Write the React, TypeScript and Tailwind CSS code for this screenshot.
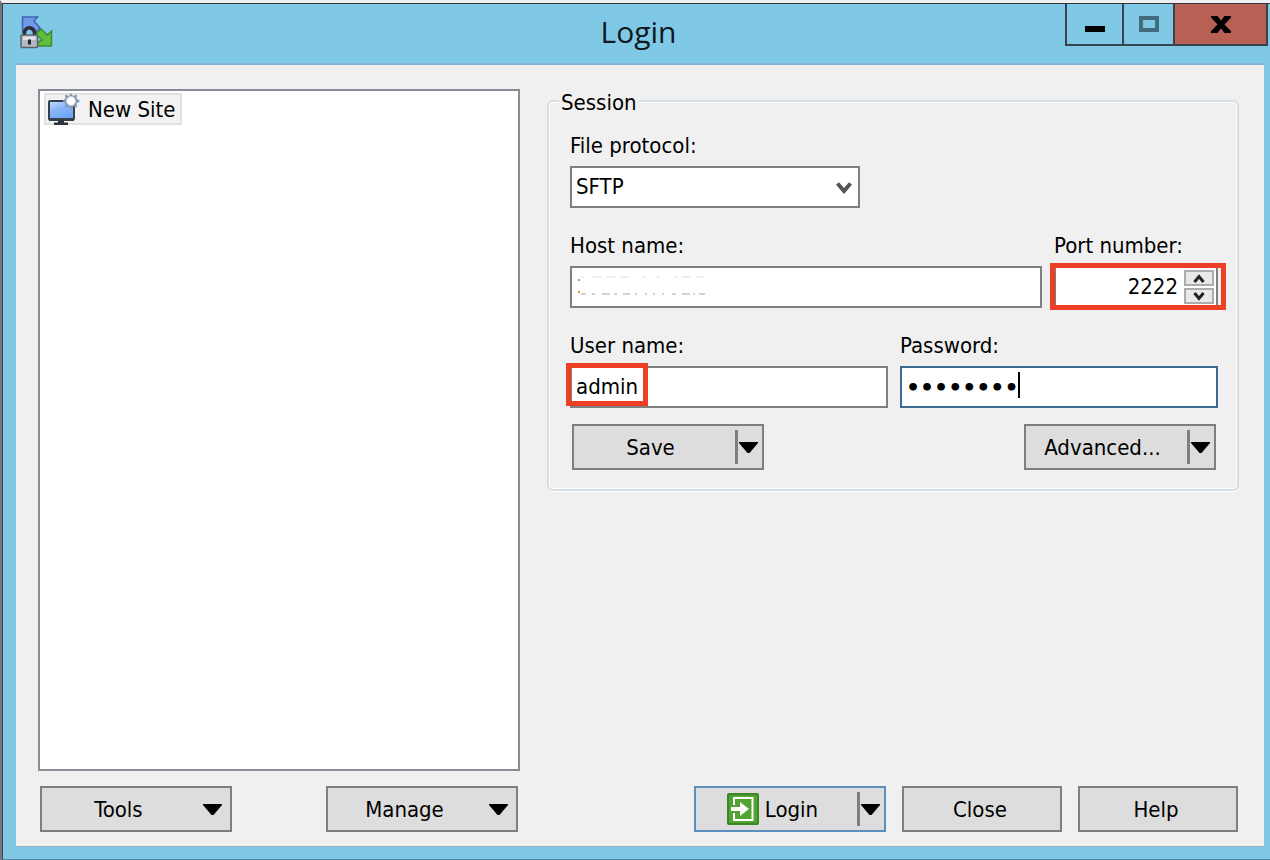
import React, { useState } from 'react';

const inputClass =
  'block h-[42px] w-full min-w-0 rounded-none border-2 border-[#7f7f7f] bg-white pb-[2px] text-black outline-none';

interface FieldProps {
  id: string;
  label: string;
  className?: string;
  children: React.ReactNode;
}

function Field({ id, label, className = '', children }: FieldProps) {
  return (
    <div className={`flex flex-col gap-[6px] ${className}`}>
      <label htmlFor={id} className="h-7 leading-7">
        {label}
      </label>
      <div className="relative">{children}</div>
    </div>
  );
}

function DownTriangle() {
  return (
    <svg width="19" height="11" viewBox="0 0 19 11" aria-hidden="true">
      <path d="M0 0H19V1L10.500 11H8.500L0 1Z" fill="#000" />
    </svg>
  );
}

interface SplitButtonProps {
  label: string;
  icon?: React.ReactNode;
  primary?: boolean;
}

// Button with a separate drop-down part on the right
function SplitButton({ label, icon, primary = false }: SplitButtonProps) {
  return (
    <div
      className={`flex h-[46px] w-48 border-2 bg-[#dddddd] ${primary ? 'border-[#5b8fbe]' : 'border-[#7f7f7f]'}`}
    >
      <button type="button" className="flex flex-1 items-center justify-center gap-[6px] pr-2">
        {icon}
        {label}
      </button>
      <div className="my-1 w-[3px] bg-[#7f7f7f]" />
      <button type="button" aria-label={`${label} options`} className="flex w-6 items-center pl-px">
        <DownTriangle />
      </button>
    </div>
  );
}

function MenuButton({ label }: { label: string }) {
  return (
    <button
      type="button"
      className="flex h-[46px] w-48 items-center border-2 border-[#7f7f7f] bg-[#dddddd] pr-2"
    >
      <span className="flex-1 pr-2">{label}</span>
      <DownTriangle />
    </button>
  );
}

function PlainButton({ label }: { label: string }) {
  return (
    <button type="button" className="h-[46px] w-40 border-2 border-[#7f7f7f] bg-[#dddddd] pr-1 text-center">
      {label}
    </button>
  );
}

function AppIcon() {
  return (
    <svg width="34" height="34" viewBox="0 0 34 34" aria-hidden="true">
      <path d="M2.500 1H17.500L14 5L20 12L15 17L8 11L2.500 16Z" fill="#6d9bea" stroke="#3f62ad" strokeWidth="1.500" />
      <path d="M16 18L21 13L27.500 19L31.500 15V30H17V27L22 24Z" fill="#62bd3c" stroke="#3b8f2c" strokeWidth="1.500" />
      <path d="M4.500 20V17C4.500 10 14.500 10 14.500 17V20" fill="none" stroke="#2c2c31" strokeWidth="3.500" />
      <rect x="1" y="19" width="16.500" height="12.500" rx="1" fill="#b3b7c4" stroke="#5d616e" strokeWidth="1.500" />
      <path d="M3 20.500H15.500V24H3Z" fill="#dfe1e8" />
      <path d="M8 23.500H11V28.500H8Z" fill="#25262c" />
    </svg>
  );
}

function SiteIcon() {
  return (
    <svg width="32" height="32" viewBox="0 0 32 32" aria-hidden="true">
      <defs>
        <linearGradient id="screen" x1="0" y1="0" x2="0.500" y2="1">
          <stop offset="0" stopColor="#c4dcff" />
          <stop offset="0.500" stopColor="#8ab5f6" />
          <stop offset="1" stopColor="#6ea5f5" />
        </linearGradient>
      </defs>
      <rect x="1" y="8" width="25" height="18.500" rx="1" fill="url(#screen)" stroke="#36414c" strokeWidth="2" />
      <path d="M1 26.500H26" stroke="#36414c" strokeWidth="3" />
      <path d="M10 27H16V29.500H20V32H6V29.500H10Z" fill="#2c343d" />
      <path
        d="M23 0L25 3L29 1.500L28.500 5.500L32 8L28.500 10.500L29 14.500L25 13.500L23 16.500L21 13.500L17 14.500L17.500 10.500L14.500 8L17.500 5.500L17 1.500L21 3Z"
        fill="#8298b0"
      />
      <circle cx="23" cy="8" r="4.500" fill="#fff" stroke="#c4d2df" />
    </svg>
  );
}

function LoginIcon() {
  return (
    <svg width="32" height="32" viewBox="0 0 32 32" aria-hidden="true">
      <rect width="32" height="32" rx="2" fill="#3e8526" />
      <rect x="2" y="2" width="28" height="28" rx="1" fill="#52a332" />
      <path d="M7 12V5H25.500V27H7V20" fill="none" stroke="#fff" strokeWidth="2" />
      <path d="M4 14H13V9L22 16L13 23V18H4Z" fill="#fff" />
    </svg>
  );
}

// Leftover specks of the blanked-out host address
function HostRemnant() {
  return (
    <svg
      className="pointer-events-none absolute top-[10px] left-2"
      width="130"
      height="20"
      viewBox="0 0 130 20"
      aria-hidden="true"
    >
      <path
        d="M3 1H6M14 1H24M29 1H37M43 1H51M65 1H68M79 1H82M97 1H100M104 1H112M119 1H127"
        stroke="#dedede"
      />
      <path
        d="M3 18H8M14 18H17M24 18H32M36 18H39M45 18H52M57 18H59M67 18H69M75 18H77M84 18H86M94 18H98M104 18H112M115 18H117M121 18H127"
        stroke="#a5a5a5"
      />
      <path d="M0 4H2M0 16H2" stroke="#cf9250" strokeWidth="2" />
    </svg>
  );
}

export default function App() {
  const [protocol, setProtocol] = useState('SFTP');
  const [port, setPort] = useState(2222);
  const [user, setUser] = useState('admin');
  const [password, setPassword] = useState('password');

  return (
    <div className="min-h-screen border-t-[3px] border-l-2 border-t-[#f0f0f0] border-l-[#77777c] bg-[#7fc9e6] font-['DejaVu_Sans_Condensed','DejaVu_Sans',sans-serif] text-[22px] text-black">
      <div className="flex min-h-[calc(100vh-3px)] flex-col border-t border-b border-l border-t-[#30373c] border-b-[#4f87a5] border-l-[#39424a]">
        {/* Title bar */}
        <header className="grid h-[59px] grid-cols-[1fr_auto_1fr] items-start">
          <div className="pt-3 pl-[17px]">
            <AppIcon />
          </div>
          <h1 className="pt-2 pl-1 font-['Open_Sans',sans-serif] text-[30px] leading-10 text-[#10181c]">Login</h1>
          <div className="mr-[2px] flex h-[42px] justify-self-end border-r-2 border-b-2 border-l-2 border-[#3a434b]">
            <button type="button" aria-label="Minimize" className="flex w-[55px] justify-center pt-[22px]">
              <span className="h-[6px] w-5 bg-black" />
            </button>
            <button
              type="button"
              aria-label="Maximize"
              className="flex w-[53px] justify-center border-x-2 border-[#3a434b] pt-3"
            >
              <span className="h-4 w-5 border-4 border-[#416a7c]" />
            </button>
            <button type="button" aria-label="Close window" className="flex w-[91px] justify-center bg-[#b96054] pt-3">
              <svg width="20" height="17" viewBox="0 0 20 17" aria-hidden="true">
                <path d="M0 0H6.500L10 4.500L13.500 0H20V1.500L13.500 8.500L20 15V17H13.500L10 12.500L6.500 17H0V15L6.500 8.500L0 1.500Z" />
              </svg>
            </button>
          </div>
        </header>

        {/* Dialog body */}
        <main className="mr-[6px] mb-3 ml-[13px] flex flex-1 gap-[27px] border-t-2 border-b border-t-[#83b3cf] border-b-[#94b4c6] bg-[#f0f0f0] pt-6 pr-[25px] pb-[14px] pl-[22px]">
          <section className="flex w-[482px] shrink-0 flex-col gap-[15px]">
            <div className="flex-1 border-2 border-[#898c95] bg-white px-1 py-[2px]">
              <ul>
                <li className="flex h-8 w-[138px] items-center border-2 border-[#e2e2e2] bg-[#f2f2f2]">
                  <button type="button" className="flex items-center gap-2 pl-[2px] whitespace-nowrap">
                    <SiteIcon />
                    New Site
                  </button>
                </li>
              </ul>
            </div>
            <div className="flex justify-between px-[2px]">
              <MenuButton label="Tools" />
              <MenuButton label="Manage" />
            </div>
          </section>

          <form className="flex min-w-0 flex-1 flex-col justify-between" onSubmit={(e) => e.preventDefault()}>
            <fieldset className="min-w-0 rounded-md border-2 border-[#d5dfe5] pr-[19px] pb-[19px] pl-[21px] shadow-[inset_0_0_0_1px_#fff,0_1px_0_#fff]">
              <legend className="-ml-[11px] h-6 bg-[#f0f0f0] px-[2px] leading-7">Session</legend>

              <div className="flex flex-col gap-6 pt-[19px]">
                <Field id="protocol" label="File protocol:" className="w-[290px]">
                  <select
                    id="protocol"
                    value={protocol}
                    onChange={(e) => setProtocol(e.target.value)}
                    className={`${inputClass} appearance-none px-1`}
                  >
                    <option>SFTP</option>
                    <option>SCP</option>
                    <option>FTP</option>
                  </select>
                  <svg
                    className="pointer-events-none absolute top-4 right-2"
                    width="16"
                    height="13"
                    viewBox="0 0 16 13"
                    aria-hidden="true"
                  >
                    <path d="M1.500 1.500L8 9L14.500 1.500" fill="none" stroke="#555" strokeWidth="4" />
                  </svg>
                </Field>

                <div className="flex gap-3">
                  <Field id="host" label="Host name:" className="flex-1">
                    <input id="host" type="text" className={`${inputClass} px-1`} />
                    <HostRemnant />
                  </Field>
                  <Field id="port" label="Port number:" className="w-[164px]">
                    <input
                      id="port"
                      type="text"
                      inputMode="numeric"
                      value={port}
                      onChange={(e) => setPort(Number(e.target.value) || 0)}
                      className={`${inputClass} pr-[38px] text-right`}
                    />
                    <div className="absolute top-1 right-1 flex flex-col gap-[2px]">
                      <button
                        type="button"
                        aria-label="Increase port"
                        onClick={() => setPort(port + 1)}
                        className="flex h-4 w-[30px] items-center justify-center border-2 border-[#acacac] bg-[#e9e9e9]"
                      >
                        <svg width="12" height="9" viewBox="0 0 12 9" aria-hidden="true">
                          <path d="M1.500 8L6 2.500L10.500 8" fill="none" stroke="#222" strokeWidth="3" />
                        </svg>
                      </button>
                      <button
                        type="button"
                        aria-label="Decrease port"
                        onClick={() => setPort(port - 1)}
                        className="flex h-4 w-[30px] items-center justify-center border-2 border-[#acacac] bg-[#e9e9e9]"
                      >
                        <svg width="12" height="9" viewBox="0 0 12 9" aria-hidden="true">
                          <path d="M1.500 1L6 6.500L10.500 1" fill="none" stroke="#222" strokeWidth="3" />
                        </svg>
                      </button>
                    </div>
                    <div className="pointer-events-none absolute -top-[3px] -right-2 -bottom-[2px] -left-1 border-[5px] border-[#ec3f25]" />
                  </Field>
                </div>

                <div className="flex gap-3">
                  <Field id="user" label="User name:" className="flex-1">
                    <input
                      id="user"
                      type="text"
                      value={user}
                      onChange={(e) => setUser(e.target.value)}
                      className={`${inputClass} px-1`}
                    />
                    <div className="pointer-events-none absolute -top-[3px] -left-1 h-[43px] w-[82px] border-[5px] border-[#ec3f25]" />
                  </Field>
                  <Field id="password" label="Password:" className="flex-1">
                    <input
                      id="password"
                      type="password"
                      value={password}
                      onChange={(e) => setPassword(e.target.value)}
                      className="block h-[42px] w-full min-w-0 border-2 border-[#3d6a93] bg-white px-1 font-['DejaVu_Sans',sans-serif] text-[22px] font-bold outline-none"
                    />
                    <div className="pointer-events-none absolute top-[6px] left-[118px] h-[26px] w-[2px] bg-black" />
                  </Field>
                </div>
              </div>

              <div className="flex justify-between px-[2px] pt-4">
                <SplitButton label="Save" />
                <SplitButton label="Advanced..." />
              </div>
            </fieldset>

            <div className="flex justify-end gap-4 pr-px">
              <SplitButton label="Login" icon={<LoginIcon />} primary />
              <PlainButton label="Close" />
              <PlainButton label="Help" />
            </div>
          </form>
        </main>
      </div>
    </div>
  );
}
